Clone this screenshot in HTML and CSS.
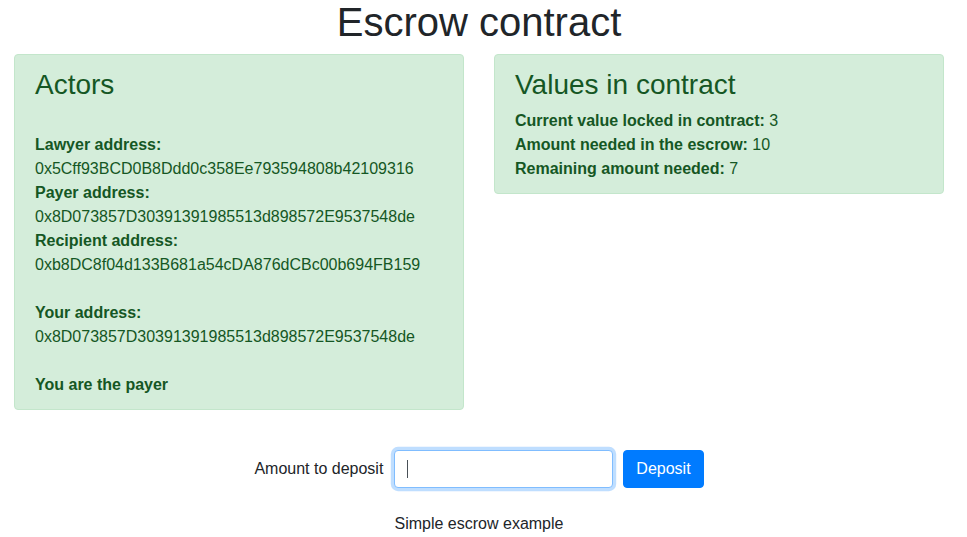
FILE: index.html
```html
<!DOCTYPE html>
<html lang="en">
<head>
<meta charset="utf-8">
<title>Escrow contract</title>
<link rel="stylesheet" href="styles.css">
</head>
<body>
<div class="page">
  <h1 class="title">Escrow contract</h1>
  <div class="cards">
    <div class="alert">
      <h3 class="alert-heading">Actors</h3>
      <div class="blank"></div>
      <div><b>Lawyer address:</b></div>
      <div>0x5Cff93BCD0B8Ddd0c358Ee793594808b42109316</div>
      <div><b>Payer address:</b></div>
      <div>0x8D073857D30391391985513d898572E9537548de</div>
      <div><b>Recipient address:</b></div>
      <div>0xb8DC8f04d133B681a54cDA876dCBc00b694FB159</div>
      <div class="blank"></div>
      <div><b>Your address:</b></div>
      <div>0x8D073857D30391391985513d898572E9537548de</div>
      <div class="blank"></div>
      <div><b>You are the payer</b></div>
    </div>
    <div class="alert alert-top">
      <h3 class="alert-heading">Values in contract</h3>
      <div><b>Current value locked in contract:</b> 3</div>
      <div><b>Amount needed in the escrow:</b> 10</div>
      <div><b>Remaining amount needed:</b> 7</div>
    </div>
  </div>
  <form class="deposit" onsubmit="return false;">
    <label class="deposit-label" for="amount">Amount to deposit</label>
    <span class="input-wrap">
      <input id="amount" class="form-control is-focused" type="text">
      <span class="caret"></span>
    </span>
    <button class="btn-primary" type="submit">Deposit</button>
  </form>
  <p class="footer">Simple escrow example</p>
</div>
</body>
</html>
```
FILE: styles.css
```css
* { box-sizing: border-box; }
html, body { margin: 0; padding: 0; background: #fff; }
body {
  font-family: "Liberation Sans", Arial, sans-serif;
  font-size: 16px;
  line-height: 1.5;
  color: #212529;
}
.page {
  width: 958px;
  padding: 0 14px;
}
.title {
  margin: 0 0 10px;
  font-size: 40px;
  line-height: 44px;
  font-weight: 500;
  text-align: center;
}
.cards {
  display: grid;
  grid-template-columns: 450px 450px;
  column-gap: 30px;
  align-items: start;
}
.alert {
  background: #d4edda;
  border: 1px solid #c3e6cb;
  border-radius: 4px;
  color: #155724;
  padding: 12px 20px;
}
.alert b { font-weight: 700; }
.alert-heading {
  margin: 0 0 6px;
  font-size: 28px;
  line-height: 35.6px;
  font-weight: 500;
}
.blank { height: 24px; }
.deposit {
  margin: 40px 0 0;
  display: flex;
  justify-content: center;
  align-items: center;
}
.deposit-label { margin-right: 11px; }
.input-wrap {
  position: relative;
  display: block;
  margin-right: 10px;
}
.form-control {
  display: block;
  width: 219px;
  height: 38px;
  padding: 6px 12px;
  font-family: inherit;
  font-size: 16px;
  color: #495057;
  background: #fff;
  border: 1px solid #ced4da;
  border-radius: 4px;
  outline: none;
}
.form-control.is-focused,
.form-control:focus {
  border-color: #80bdff;
  box-shadow: 0 0 0 3.2px rgba(0, 123, 255, .25);
}
.caret {
  position: absolute;
  left: 13px;
  top: 10px;
  width: 1px;
  height: 18px;
  background: #495057;
}
.btn-primary {
  height: 38px;
  padding: 6px 12px;
  font-family: inherit;
  font-size: 16px;
  line-height: 24px;
  color: #fff;
  background: #007bff;
  border: 1px solid #007bff;
  border-radius: 4px;
  cursor: pointer;
}
.footer {
  margin: 24px 0 0;
  text-align: center;
}
```
